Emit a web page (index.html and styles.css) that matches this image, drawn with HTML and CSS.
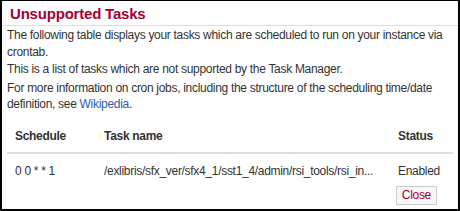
FILE: index.html
```html
<!DOCTYPE html>
<html lang="en">
<head>
  <meta charset="UTF-8" />
  <title>Unsupported Tasks</title>
  <link rel="stylesheet" href="styles.css">
</head>
<body>

<div class="dialog">
  <div class="dialog-header">
    <h2>Unsupported Tasks</h2>
  </div>
  <div class="dialog-body">
    <p>The following table displays your tasks which are scheduled to run on your instance via crontab.<br>
    This is a list of tasks which are not supported by the Task Manager.</p>
    <p>For more information on cron jobs, including the structure of the scheduling time/date<br>
    definition, see <a href="#">Wikipedia</a>.</p>

    <table class="tasks">
      <thead>
        <tr>
          <th class="col-schedule">Schedule</th>
          <th class="col-task">Task name</th>
          <th class="col-status">Status</th>
        </tr>
      </thead>
      <tbody>
        <tr>
          <td>0 0 * * 1</td>
          <td class="task-name">/exlibris/sfx_ver/sfx4_1/sst1_4/admin/rsi_tools/rsi_in...</td>
          <td>Enabled</td>
        </tr>
      </tbody>
    </table>

    <div class="dialog-footer">
      <button type="button" class="btn-close">Close</button>
    </div>
  </div>
</div>

</body>
</html>
```

FILE: styles.css
```css
body {
  margin: 0;
  font-family: "Liberation Sans", Arial, sans-serif;
  font-size: 12px;
  letter-spacing: -0.3px;
  color: #333;
  background-color: #fff;
}
.dialog {
  width: 460px;
  height: 211px;
  box-sizing: border-box;
  border: 2px solid #000;
  border-top-width: 1px;
  overflow: hidden;
}
.dialog-header {
  height: 24px;
  border-bottom: 1px solid #ddd;
  padding-left: 8px;
}
.dialog-header h2 {
  margin: 0;
  font-size: 15px;
  line-height: 25px;
  letter-spacing: -0.2px;
  color: #a50034;
}
.dialog-body {
  padding: 1px 5px 0 5px;
}
.dialog-body p {
  margin: 0 0 2px 0;
  line-height: 17px;
}
.dialog-body p + p {
  line-height: 16px;
}
.dialog-body a {
  color: #2a5db0;
  text-decoration: none;
}
.tasks {
  width: 100%;
  table-layout: fixed;
  border-collapse: collapse;
  margin-top: 11px;
}
.tasks th {
  box-sizing: border-box;
  text-align: left;
  font-weight: bold;
  padding: 6px 8px 9px 8px;
  border-bottom: 2px solid #ddd;
}
.tasks td {
  padding: 10px 8px 7px 8px;
  white-space: nowrap;
  overflow: hidden;
}
.col-schedule {
  width: 89px;
}
.col-status {
  width: 63px;
}
.dialog-footer {
  display: flex;
  justify-content: flex-end;
  padding-right: 16px;
  padding-top: 1px;
}
.btn-close {
  font-family: inherit;
  font-size: 12px;
  letter-spacing: -0.3px;
  color: #a50034;
  background-color: #f7f7f7;
  border: 1px solid #ccc;
  padding: 2px 5px;
  height: 19px;
  line-height: 13px;
}
```
